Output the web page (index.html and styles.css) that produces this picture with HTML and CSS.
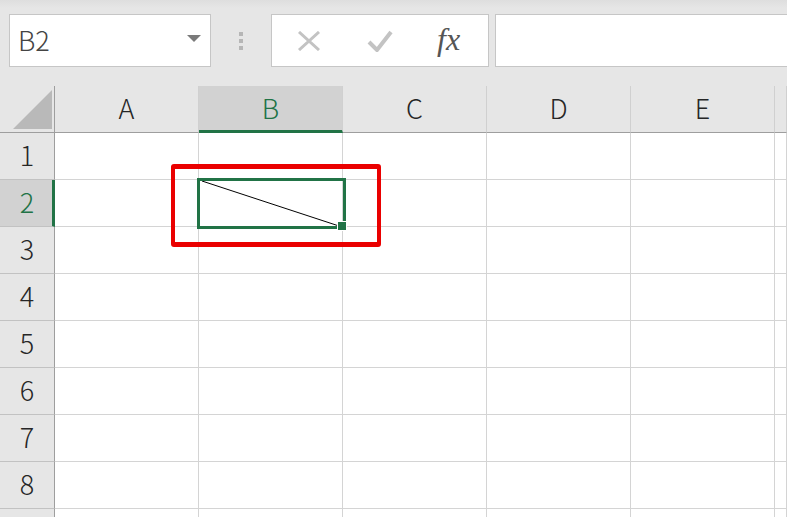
FILE: index.html
```html
<!DOCTYPE html>
<html lang="ja">
  <head>
    <meta charset="UTF-8">
    <title>Sheet</title>
    <link rel="stylesheet" href="styles.css">
  </head>
  <body>

    <div class="toolbar">
      <div class="namebox">
        <span class="cellref">B2</span>
        <svg class="caret" width="14" height="8" viewBox="0 0 14 8"><polygon points="0,0 14,0 7,7" fill="#7a7a7a"/></svg>
      </div>
      <div class="grip"><i></i><i></i><i></i></div>
      <div class="buttons">
        <svg class="btn" width="24" height="20" viewBox="0 0 24 20">
          <path d="M2 1 L22 19 M22 1 L2 19" stroke="#c3c3c3" stroke-width="3" fill="none"/>
        </svg>
        <svg class="btn" width="26" height="22" viewBox="0 0 26 22">
          <path d="M2 12 L10 20 L24 2" stroke="#c3c3c3" stroke-width="4" fill="none"/>
        </svg>
        <span class="fx">fx</span>
      </div>
      <div class="formula"></div>
    </div>

    <div class="sheet">
      <div class="head corner">
        <svg width="39" height="39" viewBox="0 0 39 39"><polygon points="39,0 39,39 0,39" fill="#b9b9b9"/></svg>
      </div>
      <div class="head col">A</div>
      <div class="head col active">B</div>
      <div class="head col">C</div>
      <div class="head col">D</div>
      <div class="head col">E</div>
      <div class="head col"></div>

      <div class="head row">1</div>
      <div class="cell"></div><div class="cell"></div><div class="cell"></div><div class="cell"></div><div class="cell"></div><div class="cell"></div>

      <div class="head row active">2</div>
      <div class="cell"></div>
      <div class="cell selected">
        <svg class="diag" width="144" height="47" viewBox="0 0 144 47"><line x1="3" y1="1" x2="140" y2="46" stroke="#000" stroke-width="1"/></svg>
        <div class="sel"></div>
        <div class="handle"></div>
      </div>
      <div class="cell"></div><div class="cell"></div><div class="cell"></div><div class="cell"></div>

      <div class="head row">3</div>
      <div class="cell"></div><div class="cell"></div><div class="cell"></div><div class="cell"></div><div class="cell"></div><div class="cell"></div>

      <div class="head row">4</div>
      <div class="cell"></div><div class="cell"></div><div class="cell"></div><div class="cell"></div><div class="cell"></div><div class="cell"></div>

      <div class="head row">5</div>
      <div class="cell"></div><div class="cell"></div><div class="cell"></div><div class="cell"></div><div class="cell"></div><div class="cell"></div>

      <div class="head row">6</div>
      <div class="cell"></div><div class="cell"></div><div class="cell"></div><div class="cell"></div><div class="cell"></div><div class="cell"></div>

      <div class="head row">7</div>
      <div class="cell"></div><div class="cell"></div><div class="cell"></div><div class="cell"></div><div class="cell"></div><div class="cell"></div>

      <div class="head row">8</div>
      <div class="cell"></div><div class="cell"></div><div class="cell"></div><div class="cell"></div><div class="cell"></div><div class="cell"></div>

      <div class="head row"></div>
      <div class="cell"></div><div class="cell"></div><div class="cell"></div><div class="cell"></div><div class="cell"></div><div class="cell"></div>

      <div class="callout"></div>
    </div>

  </body>
</html>
```

FILE: styles.css
```css
* {
  box-sizing: border-box;
  margin: 0;
  padding: 0;
}

body {
  font-family: "Noto Sans CJK JP", "Liberation Sans", sans-serif;
  font-weight: 300;
  background-color: #e6e6e6;
  height: 100vh;
  overflow: hidden;
}

.toolbar {
  height: 86px;
  display: flex;
  align-items: flex-start;
  padding: 14px 0 0 9px;
  background: linear-gradient(#dedede, #e6e6e6 8px);
}

.namebox {
  width: 202px;
  height: 53px;
  background-color: white;
  border: 1px solid #c6c6c6;
  display: flex;
  align-items: center;
  justify-content: space-between;
  padding: 0 9px 2px 8px;
}

.cellref {
  font-size: 27px;
  color: #444;
  line-height: 1;
}

.caret {
  margin-top: -2px;
}

.grip {
  width: 60px;
  height: 53px;
  display: flex;
  flex-direction: column;
  align-items: center;
  justify-content: center;
  gap: 3px;
}

.grip i {
  width: 4px;
  height: 4px;
  background-color: #b6b6b6;
}

.buttons {
  width: 218px;
  height: 53px;
  background-color: white;
  border: 1px solid #c6c6c6;
  display: flex;
  align-items: center;
  padding-left: 25px;
  gap: 48px;
}

.buttons .btn:nth-child(2) {
  margin-left: -2px;
}

.fx {
  font-family: "Liberation Serif", serif;
  font-weight: 400;
  font-style: italic;
  font-size: 32px;
  color: #555;
  margin-left: -4px;
  margin-top: -2px;
}

.formula {
  flex: 1;
  height: 53px;
  margin-left: 6px;
  margin-right: -2px;
  background-color: white;
  border: 1px solid #c6c6c6;
}

.sheet {
  position: relative;
  display: grid;
  grid-template-columns: 55px repeat(5, 144px) 1fr;
  grid-auto-rows: 47px;
  background-color: white;
}

.head {
  background-color: #e6e6e6;
  color: #262626;
  font-size: 27px;
  display: flex;
  align-items: center;
  justify-content: center;
}

.col {
  border-right: 1px solid #d0d0d0;
  border-bottom: 1px solid #9e9e9e;
  padding-bottom: 4px;
}

.corner {
  border-right: 1px solid #9e9e9e;
  border-bottom: 1px solid #9e9e9e;
  align-items: flex-end;
  justify-content: flex-end;
  padding: 0 2px 3px 0;
}

.corner svg {
  display: block;
}

.row {
  border-right: 1px solid #9e9e9e;
  border-bottom: 1px solid #c2c2c2;
  padding-bottom: 3px;
}

.col.active {
  background-color: #d2d2d2;
  color: #217346;
  border-bottom: 3px solid #217346;
  padding-bottom: 2px;
}

.row.active {
  background-color: #d2d2d2;
  color: #217346;
  border-right: 3px solid #217346;
  padding-left: 2px;
}

.cell {
  border-right: 1px solid #d4d4d4;
  border-bottom: 1px solid #d4d4d4;
}

.selected {
  position: relative;
}

.diag {
  position: absolute;
  left: 0;
  top: 0;
}

.sel {
  position: absolute;
  left: -2px;
  top: -2px;
  width: 149px;
  height: 51px;
  border: 3px solid #217346;
}

.handle {
  position: absolute;
  left: 138px;
  top: 41px;
  width: 10px;
  height: 10px;
  background-color: #217346;
  border: 1px solid white;
}

.callout {
  position: absolute;
  left: 171px;
  top: 78px;
  width: 210px;
  height: 83px;
  border: 4px solid #ea0000;
  border-top-width: 5px;
  border-bottom-width: 5px;
  border-radius: 3px;
}
```
